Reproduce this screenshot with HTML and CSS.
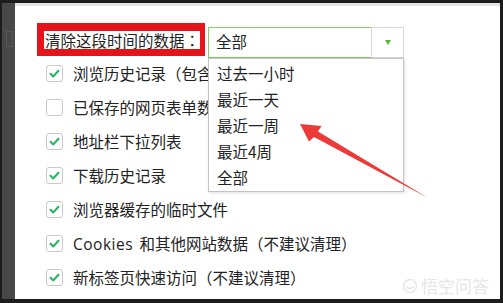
FILE: index.html
```html
<!DOCTYPE html>
<html lang="zh-CN">
<head>
<meta charset="utf-8">
<title>清除浏览数据</title>
<link rel="stylesheet" href="styles.css">
</head>
<body>
<div class="frame">
  <div class="sidebar"><span class="side-mark"></span></div>
  <div class="panel">
    <div class="header">
      <div class="label-box">清除这段时间的数据<span class="p" lang="zh-Hant">：</span></div>
      <div class="select">
        <div class="select-value">全部</div>
        <div class="select-btn"><span class="tri"></span></div>
        <ul class="menu">
          <li>过去一小时</li>
          <li>最近一天</li>
          <li>最近一周</li>
          <li>最近4周</li>
          <li>全部</li>
        </ul>
      </div>
    </div>
    <ul class="options">
      <li class="opt"><span class="cb on"><svg viewBox="0 0 17 17"><path d="M4 8.8 L7.2 11.8 L13 5.4"/></svg></span><span class="clip">浏览历史记录<span class="p" lang="zh-Hant">（</span>包含</span></li>
      <li class="opt"><span class="cb"></span><span class="clip">已保存的网页表单数据</span></li>
      <li class="opt"><span class="cb on"><svg viewBox="0 0 17 17"><path d="M4 8.8 L7.2 11.8 L13 5.4"/></svg></span><span>地址栏下拉列表</span></li>
      <li class="opt"><span class="cb on"><svg viewBox="0 0 17 17"><path d="M4 8.8 L7.2 11.8 L13 5.4"/></svg></span><span>下载历史记录</span></li>
      <li class="opt"><span class="cb on"><svg viewBox="0 0 17 17"><path d="M4 8.8 L7.2 11.8 L13 5.4"/></svg></span><span>浏览器缓存的临时文件</span></li>
      <li class="opt"><span class="cb on"><svg viewBox="0 0 17 17"><path d="M4 8.8 L7.2 11.8 L13 5.4"/></svg></span><span><span class="latin">Cookies</span> 和其他网站数据<span class="p" lang="zh-Hant">（</span>不建议清理<span class="p" lang="zh-Hant">）</span></span></li>
      <li class="opt"><span class="cb on"><svg viewBox="0 0 17 17"><path d="M4 8.8 L7.2 11.8 L13 5.4"/></svg></span><span>新标签页快速访问<span class="p" lang="zh-Hant">（</span>不建议清理<span class="p" lang="zh-Hant">）</span></span></li>
    </ul>
  </div>
</div>
<svg class="arrow" viewBox="0 0 503 303" width="503" height="303">
  <polygon points="300,124 321.5,126 318,131.5 428,198 314,137 309,141.5" fill="#ec3a36"/>
</svg>
<div class="watermark">
  <svg viewBox="0 0 16 16" width="16" height="16"><circle cx="8" cy="8" r="6.5" fill="none" stroke="#e6e6e6" stroke-width="1.4"/><path d="M4 8.5 Q8 12.5 12 8.5" fill="none" stroke="#e6e6e6" stroke-width="1.4"/></svg>
  <span>悟空问答</span>
</div>
</body>
</html>
```
FILE: styles.css
```css
html, body {
  margin: 0;
  padding: 0;
}
body {
  width: 503px;
  height: 303px;
  overflow: hidden;
  background: #1c1c1c;
  font-family: "Noto Sans CJK SC", "Microsoft YaHei", sans-serif;
  color: #222;
  position: relative;
}
.p {
  font-family: "Noto Sans CJK TC", "Noto Sans CJK SC", sans-serif;
}
.latin {
  font-family: "Open Sans", "Noto Sans", sans-serif;
  letter-spacing: 0.5px;
  margin-right: 3px;
}
.frame {
  display: flex;
  height: 303px;
  box-sizing: border-box;
  padding: 3px 3px 4px 2px;
}
.sidebar {
  width: 13px;
  background: #484848;
  flex: none;
}
.side-mark {
  display: block;
  width: 5px;
  height: 14px;
  margin: 28px 0 0 4px;
  border: 1px solid #575757;
}
.panel {
  flex: 1;
  background: #fff;
  border-top: 3px solid #e3e3e3;
  padding: 17px 0 0 22px;
}
.header {
  display: flex;
  height: 33px;
  align-items: flex-start;
}
.label-box {
  border-style: solid;
  border-color: #e5141a;
  border-width: 8px 5px 7px 7px;
  padding-left: 1px;
  width: 155px;
  height: 18px;
  font-size: 15.5px;
  line-height: 18px;
  white-space: nowrap;
  color: #1e1e1e;
}
.select {
  position: relative;
  display: flex;
  margin: 4px 0 0 3px;
  width: 196px;
  height: 31px;
}
.select-value {
  flex: 1;
  box-sizing: border-box;
  border: 1.5px solid #86d066;
  border-right: none;
  font-size: 15.5px;
  line-height: 27px;
  padding-left: 7px;
}
.select-btn {
  width: 33px;
  box-sizing: border-box;
  border: 1px solid #d6d6d6;
  display: flex;
  align-items: center;
  justify-content: center;
}
.tri {
  width: 0;
  height: 0;
  border-left: 3.5px solid transparent;
  border-right: 3.5px solid transparent;
  border-top: 5px solid #5dbb2f;
  margin-left: 1px;
}
.menu {
  position: absolute;
  top: 31px;
  left: 0;
  width: 196px;
  box-sizing: border-box;
  margin: 0;
  padding: 1px 0;
  list-style: none;
  background: #fff;
  border: 1px solid #c4c4c4;
  box-shadow: 1px 1px 3px rgba(0, 0, 0, 0.12);
  z-index: 2;
}
.menu li {
  height: 26px;
  line-height: 26px;
  padding-left: 8px;
  font-size: 15.5px;
  white-space: nowrap;
}
.options {
  list-style: none;
  margin: 0;
  padding: 0 0 0 9px;
}
.opt {
  display: flex;
  align-items: center;
  gap: 10px;
  height: 34px;
  font-size: 15.5px;
  white-space: nowrap;
}
.clip {
  max-width: 135px;
  overflow: hidden;
}
.cb {
  width: 17px;
  height: 17px;
  box-sizing: border-box;
  border: 1px solid #c9c9c9;
  border-radius: 3px;
  background: #fff;
  flex: none;
  display: flex;
}
.cb svg {
  width: 15px;
  height: 15px;
}
.cb path {
  fill: none;
  stroke: #22b45e;
  stroke-width: 2.3;
  stroke-linecap: round;
  stroke-linejoin: round;
}
.arrow {
  position: absolute;
  top: 0;
  left: 0;
  pointer-events: none;
  z-index: 3;
}
.watermark {
  position: absolute;
  left: 402px;
  top: 277px;
  display: flex;
  align-items: center;
  gap: 3px;
  color: #e6e6e6;
  font-size: 17px;
  line-height: 18px;
  z-index: 3;
}
```
